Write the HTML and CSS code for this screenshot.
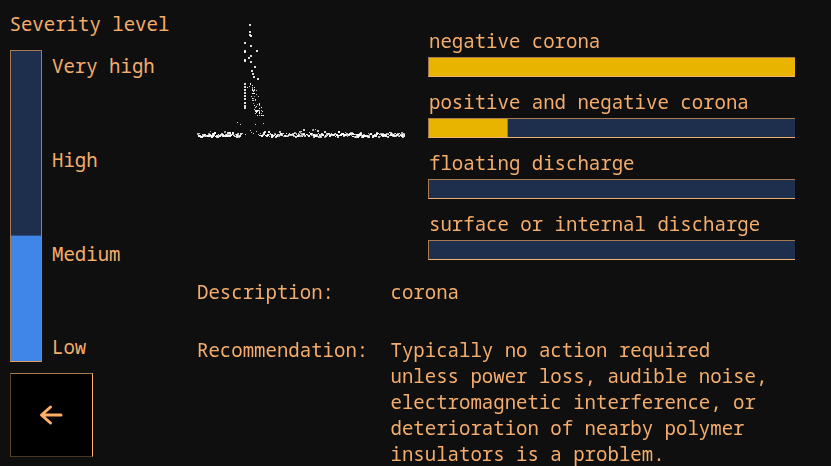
FILE: index.html
```html
<!DOCTYPE html>
<html lang="en">
<head>
    <meta charset="UTF-8">
    <title>Severity level</title>
    <link rel="stylesheet" href="styles.css">
</head>
<body>
    <div class="page">
        <div class="severity">
            <div class="severity-title">Severity level</div>
            <div class="severity-scale">
                <div class="severity-bar">
                    <div class="severity-fill"></div>
                </div>
                <div class="severity-labels">
                    <span>Very high</span>
                    <span>High</span>
                    <span>Medium</span>
                    <span>Low</span>
                </div>
            </div>
            <button class="back-button" type="button" aria-label="Back">
                <svg width="26" height="22" viewBox="0 0 26 22">
                    <path d="M2.500 11H22M11.500 3L2.500 11L11.500 19" fill="none" stroke="#ffb066" stroke-width="3" stroke-linecap="round" stroke-linejoin="round"/>
                </svg>
            </button>
        </div>

        <div class="main">
            <div class="top-row">
                <canvas id="plot" class="plot" width="208" height="122"></canvas>
                <div class="classes">
                    <div class="class-row">
                        <div class="class-label">negative corona</div>
                        <div class="class-bar"><div class="class-fill full"></div></div>
                    </div>
                    <div class="class-row">
                        <div class="class-label">positive and negative corona</div>
                        <div class="class-bar"><div class="class-fill part"></div></div>
                    </div>
                    <div class="class-row">
                        <div class="class-label">floating discharge</div>
                        <div class="class-bar"></div>
                    </div>
                    <div class="class-row">
                        <div class="class-label">surface or internal discharge</div>
                        <div class="class-bar"></div>
                    </div>
                </div>
            </div>

            <div class="details">
                <div class="detail-name">Description:</div>
                <div class="detail-value">corona</div>
                <div class="detail-name">Recommendation:</div>
                <div class="detail-value">Typically no action required<br>unless power loss, audible noise,<br>electromagnetic interference, or<br>deterioration of nearby polymer<br>insulators is a problem.</div>
            </div>
        </div>
    </div>
    <script src="plot.js"></script>
</body>
</html>
```

FILE: styles.css
```css
html, body {
    margin: 0;
    height: 100%;
    overflow: hidden;
    background-color: #0f0f0f;
}

body {
    font-family: "Noto Sans Mono", "DejaVu Sans Mono", monospace;
    font-size: 19.05px;
    line-height: 26px;
    color: #f4ad6c;
}

.page {
    display: flex;
    height: 466px;
}

/* Left column */
.severity {
    width: 197px;
    flex-shrink: 0;
    padding: 11px 0 0 10px;
    box-sizing: border-box;
}

.severity-title {
    height: 26px;
    margin-left: -0.5px;
}

.severity-scale {
    display: flex;
    height: 312px;
    margin-top: 13px;
    margin-bottom: 11px;
}

.severity-bar {
    display: flex;
    flex-direction: column;
    justify-content: flex-end;
    width: 32px;
    box-sizing: border-box;
    border: 1px solid #a87a50;
    border-bottom-color: #e0a060;
    background-color: #1e2f4d;
}

.severity-fill {
    height: 125px;
    border-top: 1px solid #2c4f8a;
    background-color: #3f86e8;
}

.severity-labels {
    display: flex;
    flex-direction: column;
    justify-content: space-between;
    margin-left: 10px;
    padding: 3px 0 1.7px;
}

.back-button {
    display: flex;
    align-items: center;
    justify-content: center;
    width: 83px;
    height: 84px;
    padding: 0;
    background-color: #000;
    border-style: solid;
    border-width: 1px;
    border-color: #a87a50 #ffb066 #4a3826 #5a4430;
}

/* Plot and class bars */
.main {
    flex: 1;
}

.top-row {
    display: flex;
}

.plot {
    display: block;
    width: 208px;
    height: 122px;
    margin-top: 20px;
}

.classes {
    width: 367px;
    margin-left: 23px;
    padding-top: 27.5px;
}

.class-row {
    margin-bottom: 11.5px;
}

.class-label {
    height: 26px;
    margin-bottom: 3.5px;
    padding-left: 1px;
}

.class-bar {
    height: 20px;
    box-sizing: border-box;
    border: 1px solid #a87a50;
    border-bottom-color: #f0b070;
    border-right-width: 0;
    background-color: #1e2f4d;
}

.class-fill {
    height: 100%;
    background-color: #e8b400;
}

.class-fill.full {
    width: 100%;
}

.class-fill.part {
    width: 78px;
    border-right: 1px solid #a87a50;
}

/* Description block */
.details {
    display: grid;
    grid-template-columns: 193.500px 1fr;
    row-gap: 32px;
    margin-top: 7.5px;
}

.detail-value {
    white-space: nowrap;
}
```

FILE: plot.js
```js
// PRPD style scatter, white dots on the dark background
const canvas = document.getElementById('plot');
const ctx = canvas.getContext('2d');

// small seeded generator so the picture is the same every time
let seed = 7;
function rand() {
    seed = (seed * 16807) % 2147483647;
    return seed / 2147483647;
}

function dot(x, y, size, alpha) {
    ctx.fillStyle = `rgba(255, 255, 255, ${alpha})`;
    ctx.fillRect(Math.round(x), Math.round(y), size, size);
}

// baseline, with a gap under the peak and a small bump after it
for (let x = 0; x < 208; x += 0.5) {
    if (x > 43 && x < 61) continue;
    const bump = x > 90 && x < 125 ? 2 : 0;
    const y = 114.5 + (rand() - 0.5) * 3 - (rand() < 0.12 ? 2 + bump : 0);
    dot(x, y, rand() < 0.5 ? 2 : 1, 0.6 + rand() * 0.4);
}

// upper part of the peak, read from the reference
const peak = [
    [52, 4], [52, 11], [52, 14], [53, 15], [47, 22], [47, 30], [47, 31], [53, 25], [59, 30],
    [47, 39], [47, 40], [51, 37], [53, 35], [57, 46], [53, 41], [54, 50], [55, 53], [56, 56], [60, 58],
    [47, 63], [47, 66], [47, 69], [47, 72], [47, 75], [47, 78], [47, 82], [47, 85], [47, 87]
];
peak.forEach(p => dot(p[0], p[1], 2, 0.85));

// dense part, leaning right as it goes down
for (let i = 0; i < 70; i++) {
    const y = 63 + rand() * 33;
    const x = 49 + (y - 63) * 0.3 + rand() * 8;
    dot(x, y, 1, 0.6 + rand() * 0.4);
}

// dots between the cluster and the baseline
const low = [[40, 102], [43, 104], [58, 104], [66, 103], [53, 110], [54, 112], [56, 113], [59, 111], [45, 113], [48, 114]];
low.forEach(p => dot(p[0], p[1], 1, 0.8));
```
